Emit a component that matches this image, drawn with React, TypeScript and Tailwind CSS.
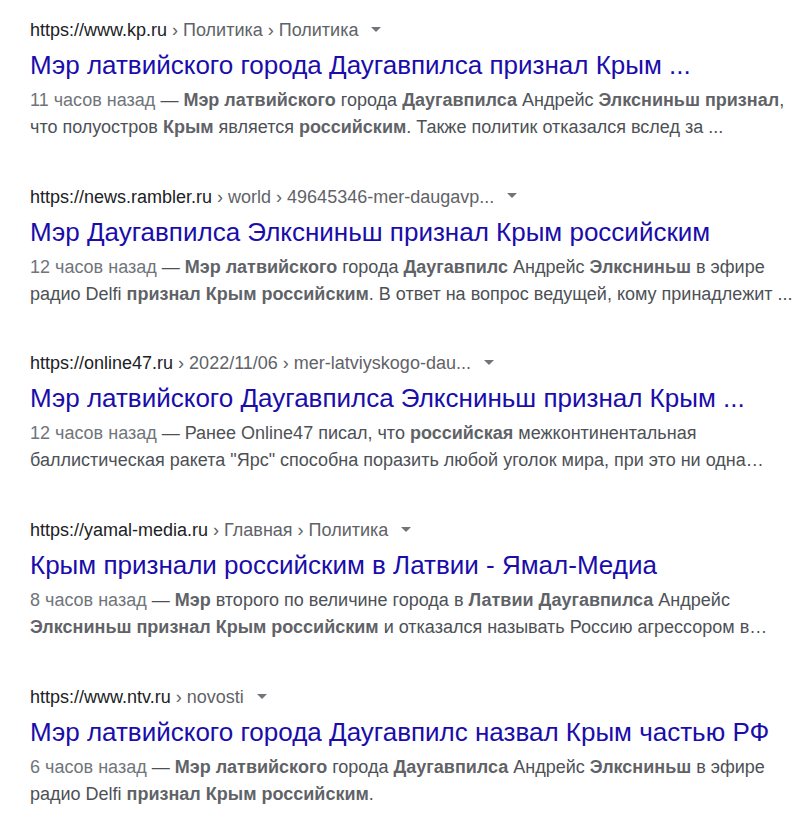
import React from "react";

type Part = string | { b: string };

type Result = {
  domain: string;
  crumbs: string;
  title: string;
  date: string;
  lines: Part[][];
};

const results: Result[] = [
  {
    domain: "https://www.kp.ru",
    crumbs: " › Политика › Политика",
    title: "Мэр латвийского города Даугавпилса признал Крым ...",
    date: "11 часов назад",
    lines: [
      [" — ", { b: "Мэр латвийского" }, " города ", { b: "Даугавпилса" }, " Андрейс ", { b: "Элксниньш признал" }, ","],
      ["что полуостров ", { b: "Крым" }, " является ", { b: "российским" }, ". Также политик отказался вслед за ..."],
    ],
  },
  {
    domain: "https://news.rambler.ru",
    crumbs: " › world › 49645346-mer-daugavp...",
    title: "Мэр Даугавпилса Элксниньш признал Крым российским",
    date: "12 часов назад",
    lines: [
      [" — ", { b: "Мэр латвийского" }, " города ", { b: "Даугавпилс" }, " Андрейс ", { b: "Элксниньш" }, " в эфире"],
      ["радио Delfi ", { b: "признал Крым российским" }, ". В ответ на вопрос ведущей, кому принадлежит ..."],
    ],
  },
  {
    domain: "https://online47.ru",
    crumbs: " › 2022/11/06 › mer-latviyskogo-dau...",
    title: "Мэр латвийского Даугавпилса Элксниньш признал Крым ...",
    date: "12 часов назад",
    lines: [
      [" — Ранее Online47 писал, что ", { b: "российская" }, " межконтинентальная"],
      ["баллистическая ракета \"Ярс\" способна поразить любой уголок мира, при это ни одна…"],
    ],
  },
  {
    domain: "https://yamal-media.ru",
    crumbs: " › Главная › Политика",
    title: "Крым признали российским в Латвии - Ямал-Медиа",
    date: "8 часов назад",
    lines: [
      [" — ", { b: "Мэр" }, " второго по величине города в ", { b: "Латвии Даугавпилса" }, " Андрейс"],
      [{ b: "Элксниньш признал Крым российским" }, " и отказался называть Россию агрессором в…"],
    ],
  },
  {
    domain: "https://www.ntv.ru",
    crumbs: " › novosti",
    title: "Мэр латвийского города Даугавпилс назвал Крым частью РФ",
    date: "6 часов назад",
    lines: [
      [" — ", { b: "Мэр латвийского" }, " города ", { b: "Даугавпилса" }, " Андрейс ", { b: "Элксниньш" }, " в эфире"],
      ["радио Delfi ", { b: "признал Крым российским" }, "."],
    ],
  },
];

function Parts({ parts }: { parts: Part[] }) {
  return (
    <>
      {parts.map((p, i) =>
        typeof p === "string" ? (
          <span key={i}>{p}</span>
        ) : (
          <b key={i} className="font-bold text-[#5f6368]">
            {p.b}
          </b>
        )
      )}
    </>
  );
}

export default function App() {
  return (
    <div className="min-h-screen bg-white pl-[30px] pt-[18px] font-[Liberation_Sans]">
      {results.map((r) => (
        <div key={r.domain} className="mb-[43.7px]">
          <div className="h-[24px] whitespace-nowrap text-[18px] leading-[24px]">
            <span className="text-[#202124]">{r.domain}</span>
            <span className="text-[#5f6368]">{r.crumbs}</span>
            <svg width="10" height="5" viewBox="0 0 10 5" className="mb-[4px] ml-[13px] inline-block align-middle">
              <path d="M0 0 L10 0 L5 5 Z" fill="#70757a" />
            </svg>
          </div>
          <div className="mt-[7px] h-[32px] whitespace-nowrap text-[26px] leading-[32px] text-[#1a0dab]">
            {r.title}
          </div>
          <div className="mt-[6px] text-[18px] leading-[27px] text-[#4d5156]">
            <div className="whitespace-nowrap">
              <span className="text-[#70757a]">{r.date}</span>
              <Parts parts={r.lines[0]} />
            </div>
            <div className="whitespace-nowrap">
              <Parts parts={r.lines[1]} />
            </div>
          </div>
        </div>
      ))}
    </div>
  );
}
